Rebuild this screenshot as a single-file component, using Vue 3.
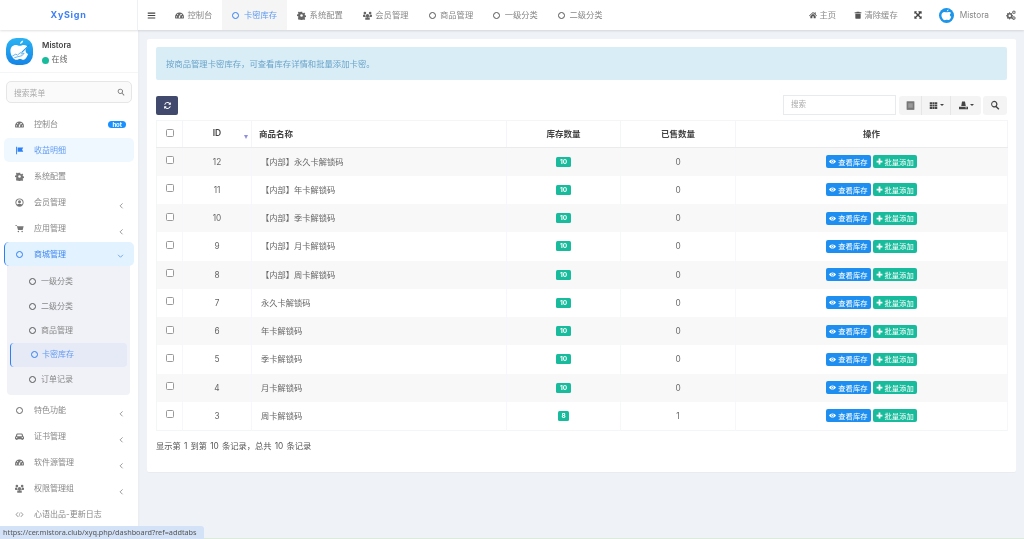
<script setup>
const icons = {
  gauge: 'M12 4a12 12 0 0 0-12 12c0 1.500.3 3 .8 4h22.400c.5-1 .8-2.500.8-4A12 12 0 0 0 12 4zm-8 13a1.600 1.600 0 1 1 0-3.200A1.600 1.600 0 0 1 4 17zm3-6a1.600 1.600 0 1 1 0-3.200A1.600 1.600 0 0 1 7 11zm5 7.500a2.300 2.300 0 0 1-1-4.300L14.500 8l1 .4-2 6.800a2.300 2.300 0 0 1-1.500 3.300zM17 11a1.600 1.600 0 1 1 0-3.200 1.600 1.600 0 0 1 0 3.200zm3 6a1.600 1.600 0 1 1 0-3.200 1.600 1.600 0 0 1 0 3.200z',
  cog: 'M10 2h4l.6 3 2 .9 2.600-1.700 2.800 2.800-1.700 2.600.9 2 2.800.6v4l-2.800.6-.9 2 1.700 2.600-2.800 2.800-2.600-1.700-2 .9-.6 2.600h-4l-.6-2.600-2-.9-2.600 1.700L2.200 18.800l1.700-2.600-.9-2-3-.6v-4l3-.6.9-2-1.700-2.600L5 1.400l2.600 1.700 2-.9zM12 8.500a3.500 3.500 0 1 0 0 7 3.500 3.500 0 0 0 0-7z',
  flag: 'M3 2h2.500v20H3zM7 4h15l-3 5 3 6H7z',
  user: 'M12 1a11 11 0 1 0 0 22 11 11 0 0 0 0-22zm0 2.500a8.500 8.500 0 0 1 6.500 14c-1.500-1.600-3.800-2.500-6.500-2.500s-5 .9-6.500 2.500A8.500 8.500 0 0 1 12 3.500zM12 6a4 4 0 1 0 0 8 4 4 0 0 0 0-8z',
  cart: 'M1 3h4l1 3h17l-2.500 10H8L5 5H1zM9 18a2 2 0 1 1 0 4 2 2 0 0 1 0-4zm10 0a2 2 0 1 1 0 4 2 2 0 0 1 0-4z',
  car: 'M6 4h12c1 0 1.800.6 2.200 1.500L22 11c1.200.5 2 1.500 2 3v5h-3v2h-3.500v-2h-11v2H3v-2H0v-5c0-1.500.8-2.500 2-3l1.800-5.500C4.200 4.600 5 4 6 4zm.6 2.500L5.200 11h13.600l-1.400-4.500zM4.500 13a1.800 1.800 0 1 0 0 3.600 1.800 1.800 0 0 0 0-3.600zm15 0a1.800 1.800 0 1 0 0 3.600 1.800 1.800 0 0 0 0-3.600z',
  users: 'M12 8a4.500 4.500 0 1 1 0 9 4.500 4.500 0 0 1 0-9zM5 2a3.500 3.500 0 1 1 0 7 3.500 3.500 0 0 1 0-7zm14 0a3.500 3.500 0 1 1 0 7 3.500 3.500 0 0 1 0-7zM0 10h6c-.5 2.500.5 5 2 6H3l-3-1zm24 0h-6c.5 2.500-.5 5-2 6h5l3-1zM6 17.500h12V23H6z',
  code: 'M8 5l1.500 1.500L4 12l5.500 5.500L8 19l-7-7zm8 0l7 7-7 7-1.500-1.500L20 12l-5.500-5.500zM12.500 7h2L11.500 17h-2z',
  home: 'M12 3l5 4.500V4h3v6.200L24 14l-1.500 1.500L12 6 1.500 15.500 0 14zM4 15.500l8-7 8 7V22h-6v-6h-4v6H4z',
  trash: 'M8 2h8l1 2h5v3H2V4h5zM4 8h16v13.500c0 .8-.7 1.500-1.500 1.500h-13C4.700 23 4 22.300 4 21.500z',
  expand: 'M1 1h8L6.500 3.500 12 9l3-3-2.500-5H23v8l-2.500-2.500L15 12l5.500 5.500L23 15v8h-8l2.500-2.500L12 15l-5.500 5.500L9 23H1v-8l2.500 2.500L9 12 3.500 6.500 1 9z',
  cogs: 'M8 5l1.500.4.600 1.800 1.700.7 1.700-.8 1.700 1.700-.8 1.700.7 1.700 1.800.6v2.400l-1.800.6-.7 1.700.8 1.700-1.700 1.700-1.700-.8-1.700.7-.6 1.800H7.800l-.6-1.800-1.700-.7-1.700.8-1.700-1.700.8-1.700-.7-1.700-1.800-.6v-2.400l1.800-.6.7-1.700-.8-1.700 1.700-1.700 1.700.8 1.700-.7zm1 6a3 3 0 1 0 0 6 3 3 0 0 0 0-6zM19 1a2.800 2.800 0 0 1 2.700 2.200l1.800.8-1 1.700.5 1.800-1.800.8A3 3 0 0 1 19 9.500 3 3 0 0 1 16.500 8l-1.800-.5.300-2-.3-1.800 1.800-.6A2.800 2.800 0 0 1 19 1zm0 2.500a1.700 1.700 0 1 0 0 3.400 1.700 1.700 0 0 0 0-3.400zM19 15a2.800 2.800 0 0 1 2.700 2.200l1.800.8-1 1.700.5 1.800-1.800.8a3 3 0 0 1-5.200 0l-1.800-.8.500-1.800-.5-1.700 1.800-.8A2.800 2.800 0 0 1 19 15zm0 2.500a1.700 1.700 0 1 0 0 3.400 1.700 1.700 0 0 0 0-3.400z',
  refresh: 'M12 3a9 9 0 0 1 6.400 2.600L21 3v7h-7l2.700-2.700A6.500 6.500 0 0 0 5.900 10H3.200A9 9 0 0 1 12 3zM3 14h7l-2.700 2.700A6.500 6.500 0 0 0 18.100 14h2.700A9 9 0 0 1 5.600 18.400L3 21z',
  list: 'M2 1h20v22H2zm4 5v12h12V6z',
  th: 'M2 3h6v5H2zm7 0h6v5H9zm7 0h6v5h-6zM2 9.500h6v5H2zm7 0h6v5H9zm7 0h6v5h-6zM2 16h6v5H2zm7 0h6v5H9zm7 0h6v5h-6z',
  export: 'M8 1h8l2 12H6zM0 15h24v7H0zm17 2.500v2h4v-2z',
  search: 'M10 2a8 8 0 0 1 6.300 12.900l6.200 6.200-2.400 2.400-6.200-6.200A8 8 0 1 1 10 2zm0 3a5 5 0 1 0 0 10 5 5 0 0 0 0-10z',
  eye: 'M12 5c5 0 9.500 3 12 7-2.500 4-7 7-12 7S2.500 16 0 12c2.500-4 7-7 12-7zm0 2.500a4.500 4.500 0 1 0 0 9 4.500 4.500 0 0 0 0-9zm0 2a2.500 2.500 0 1 1 0 5 2.500 2.500 0 0 1 0-5z',
  plus: 'M9 2h6v7h7v6h-7v7H9v-7H2V9h7z',
  bars: 'M2 4h20v3H2zm0 6.500h20v3H2zM2 17h20v3H2z',
  search2: 'M10 2a8 8 0 0 1 6.300 12.900l6.200 6.200-1.800 1.800-6.200-6.200A8 8 0 1 1 10 2zm0 2.500a5.500 5.500 0 1 0 0 11 5.500 5.500 0 0 0 0-11z'
}

const tabs = [
  { icon: 'gauge', label: '控制台' },
  { ring: true, label: '卡密库存', active: true },
  { icon: 'cog', label: '系统配置' },
  { icon: 'users', label: '会员管理' },
  { ring: true, label: '商品管理' },
  { ring: true, label: '一级分类' },
  { ring: true, label: '二级分类' }
]

const menuTop = [
  { icon: 'gauge', label: '控制台', hot: true },
  { icon: 'flag', label: '收益明细', current: true },
  { icon: 'cog', label: '系统配置' },
  { icon: 'user', label: '会员管理', arrow: true },
  { icon: 'cart', label: '应用管理', arrow: true }
]
const subMenu = [
  { label: '一级分类' },
  { label: '二级分类' },
  { label: '商品管理' },
  { label: '卡密库存', active: true },
  { label: '订单记录' }
]
const menuBottom = [
  { ring: true, label: '特色功能', arrow: true },
  { icon: 'car', label: '证书管理', arrow: true },
  { icon: 'gauge', label: '软件源管理', arrow: true },
  { icon: 'users', label: '权限管理组', arrow: true },
  { icon: 'code', label: '心语出品-更新日志', faint: true }
]
const rows = [
  { id: 12, name: '【内部】永久卡解锁码', stock: 10, sold: 0 },
  { id: 11, name: '【内部】年卡解锁码', stock: 10, sold: 0 },
  { id: 10, name: '【内部】季卡解锁码', stock: 10, sold: 0 },
  { id: 9, name: '【内部】月卡解锁码', stock: 10, sold: 0 },
  { id: 8, name: '【内部】周卡解锁码', stock: 10, sold: 0 },
  { id: 7, name: '永久卡解锁码', stock: 10, sold: 0 },
  { id: 6, name: '年卡解锁码', stock: 10, sold: 0 },
  { id: 5, name: '季卡解锁码', stock: 10, sold: 0 },
  { id: 4, name: '月卡解锁码', stock: 10, sold: 0 },
  { id: 3, name: '周卡解锁码', stock: 8, sold: 1 }
]
const apple = 'M27 11.500c.3-3.300 2.800-6 6-6.500.2 3.500-2.500 6.300-6 6.500zM19 13.500c3 0 5 1.500 7.500 1.500s4.500-1.500 8-1.500c3.300 0 6 1.500 7.500 4-3.300 1.800-4.500 4.300-4.300 7 .2 3 2 5 4.800 6.200-1.700 5-5.500 11.300-9 11.300-2.300 0-3.500-1.500-6.500-1.500s-4.300 1.500-6.500 1.500C15.500 43 8.500 33.500 8.500 25 8.500 18 13 13.500 19 13.500z'
</script>

<template>
  <div class="page">
    <header class="topbar">
      <div class="logo">XySign</div>
      <div class="tabbar">
        <span class="burger"><svg class="ic burger-ic" viewBox="0 0 24 24"><path :d="icons.bars" /></svg></span>
        <div v-for="t in tabs" :key="t.label" class="tab" :class="{ 'tab-active': t.active }">
          <i v-if="t.ring" class="ring tab-ring"></i>
          <svg v-else class="ic" viewBox="0 0 24 24"><path :d="icons[t.icon]" /></svg>
          <span class="lift">{{ t.label }}</span>
        </div>
        <div class="top-right">
          <span class="tool tool-home"><svg class="ic" viewBox="0 0 24 24"><path :d="icons.home" /></svg><span class="lift">主页</span></span>
          <span class="tool tool-clear"><svg class="ic" viewBox="0 0 24 24"><path :d="icons.trash" /></svg><span class="lift">清除缓存</span></span>
          <svg class="ic tool-expand" viewBox="0 0 24 24"><path :d="icons.expand" /></svg>
          <svg class="avatar-small" viewBox="0 0 52 52">
            <circle cx="26" cy="26" r="26" fill="#1c95ea" />
            <path :d="apple" fill="#fff" />
          </svg>
          <span class="top-name">Mistora</span>
          <svg class="ic tool-cogs" viewBox="0 0 24 24"><path :d="icons.cogs" /></svg>
        </div>
      </div>
    </header>

    <div class="body">
      <aside class="sidebar">
        <div class="user">
          <svg class="avatar" viewBox="0 0 52 52">
            <defs>
              <linearGradient id="avatarFill" x1="0" y1="0" x2="0" y2="1">
                <stop offset="0" stop-color="#2bb3f3" />
                <stop offset="1" stop-color="#1485e6" />
              </linearGradient>
            </defs>
            <rect width="52" height="52" rx="20" fill="url(#avatarFill)" />
            <path :d="apple" fill="#fff" />
            <path d="M12 35l7-4 3 2 6-5 2 3 5-2-4 5-8 2-7 2" fill="none" stroke="#5eb2ef" stroke-width="1.800" />
            <path d="M30 28L45 13" stroke="#1c8fe8" stroke-width="2" />
          </svg>
          <div class="user-info">
            <div class="user-name">Mistora</div>
            <div class="user-status"><i class="dot"></i><span class="lift">在线</span></div>
          </div>
        </div>
        <div class="side-search">
          <span>搜索菜单</span>
          <svg class="ic" viewBox="0 0 24 24"><path :d="icons.search2" /></svg>
        </div>
        <nav class="menu">
          <div v-for="m in menuTop" :key="m.label" class="item" :class="{ 'item-current': m.current }">
            <svg class="ic item-ic" viewBox="0 0 24 24"><path :d="icons[m.icon]" /></svg>
            <span class="item-label lift">{{ m.label }}</span>
            <b v-if="m.hot" class="hot">hot</b>
            <svg v-if="m.arrow" class="chev" viewBox="0 0 10 10"><path d="M6.500 2L3 5.500l3.500 3.500" /></svg>
          </div>
          <div class="item item-open">
            <i class="ring item-ring"></i>
            <span class="item-label lift">商城管理</span>
            <svg class="chev chev-open" viewBox="0 0 10 10"><path d="M1.500 4l3.500 3.500L8.500 4" /></svg>
          </div>
          <div class="submenu">
            <div v-for="s in subMenu" :key="s.label" class="sub" :class="{ 'sub-active': s.active }">
              <i class="ring sub-ring"></i>
              <span class="lift">{{ s.label }}</span>
            </div>
          </div>
          <div v-for="m in menuBottom" :key="m.label" class="item">
            <i v-if="m.ring" class="ring item-ring plain"></i>
            <svg v-else class="ic item-ic" :class="{ faint: m.faint }" viewBox="0 0 24 24"><path :d="icons[m.icon]" /></svg>
            <span class="item-label lift">{{ m.label }}</span>
            <svg v-if="m.arrow" class="chev" viewBox="0 0 10 10"><path d="M6.500 2L3 5.500l3.500 3.500" /></svg>
          </div>
        </nav>
      </aside>

      <main class="main">
        <section class="card">
          <div class="alert">按商品管理卡密库存，可查看库存详情和批量添加卡密。</div>
          <div class="toolbar">
            <button class="refresh"><svg class="ic" viewBox="0 0 24 24"><path :d="icons.refresh" /></svg></button>
            <div class="tools">
              <div class="fake-input">搜索</div>
              <div class="btn-group">
                <span class="gbtn g1"><svg class="ic" viewBox="0 0 24 24"><rect x="2" y="1" width="20" height="22" fill="#999" /><path :d="icons.list" /></svg></span>
                <span class="gbtn g2"><svg class="ic" viewBox="0 0 24 24"><path :d="icons.th" /></svg><i class="caret"></i></span>
                <span class="gbtn g3"><svg class="ic" viewBox="0 0 24 24"><path :d="icons.export" /></svg><i class="caret"></i></span>
              </div>
              <span class="gbtn gsearch"><svg class="ic" viewBox="0 0 24 24"><path :d="icons.search" /></svg></span>
            </div>
          </div>
          <table class="grid">
            <colgroup>
              <col class="c1" /><col class="c2" /><col class="c3" /><col class="c4" /><col class="c5" /><col class="c6" />
            </colgroup>
            <thead>
              <tr>
                <th class="cen"><i class="check check-head"></i></th>
                <th class="cen id-head">ID<i class="sort"></i></th>
                <th class="left">商品名称</th>
                <th class="cen">库存数量</th>
                <th class="cen">已售数量</th>
                <th class="cen">操作</th>
              </tr>
            </thead>
            <tbody>
              <tr v-for="r in rows" :key="r.id">
                <td class="cen"><i class="check"></i></td>
                <td class="cen">{{ r.id }}</td>
                <td class="name">{{ r.name }}</td>
                <td class="cen"><b class="badge">{{ r.stock }}</b></td>
                <td class="cen">{{ r.sold }}</td>
                <td class="cen ops">
                  <span class="op op-blue"><svg class="ic" viewBox="0 0 24 24"><path :d="icons.eye" /></svg>查看库存</span>
                  <span class="op op-green"><svg class="ic" viewBox="0 0 24 24"><path :d="icons.plus" /></svg>批量添加</span>
                </td>
              </tr>
            </tbody>
          </table>
          <div class="summary">显示第 1 到第 10 条记录，总共 10 条记录</div>
        </section>
      </main>
    </div>
    <div class="statusbar">https://cer.mistora.club/xyq.php/dashboard?ref=addtabs</div>
    <div class="bottomline"></div>
  </div>
</template>

<style>
html, body { margin: 0; padding: 0; background: #eff3f8; }
</style>

<style scoped>
.page {
  position: relative;
  width: 1024px;
  height: 539px;
  overflow: hidden;
  font-family: Inter, "Noto Sans CJK SC", sans-serif;
  font-size: 8px;
  color: #666;
  display: flex;
  flex-direction: column;
  will-change: transform;
}
.ic { width: 9px; height: 9px; fill: currentColor; flex: none; display: block; }
.ring { display: block; box-sizing: border-box; border-radius: 50%; border: 1.300px solid #555; flex: none; }
.lift { display: block; margin-bottom: 2px; }

.topbar { height: 30px; flex: none; display: flex; background: #fff; box-shadow: 0 1px 2px rgba(0,0,0,.12); position: relative; z-index: 3; }
.logo { width: 138px; flex: none; box-sizing: border-box; border-right: 1px solid #eef0f3; text-align: center; line-height: 30px; color: #3d7ff5; font-weight: 700; font-size: 9px; letter-spacing: .7px; }
.tabbar { flex: 1; display: flex; align-items: stretch; min-width: 0; }
.burger { width: 27px; flex: none; display: flex; align-items: center; justify-content: center; color: #444; }
.burger-ic { width: 9px; height: 9px; }
.tab { display: flex; align-items: center; gap: 3.500px; padding: 0 10px; color: #888; font-size: 8.300px; white-space: nowrap; }
.tab .ic { color: #666; width: 9px; height: 9px; }
.tab-ring { width: 7px; height: 7px; margin-right: 1px; }
.tab-active { background: #f5f5f5; color: #5f9af2; }
.tab-active .tab-ring { border-color: #2d7ff5; }
.top-right { margin-left: auto; display: flex; align-items: center; color: #888; font-size: 8.300px; padding-right: 8px; }
.tool { display: flex; align-items: center; gap: 2.500px; white-space: nowrap; }
.tool .ic { color: #555; width: 8px; height: 8px; }
.tool-clear { margin-left: 18px; }
.tool-expand { margin-left: 16px; width: 8px; height: 8px; color: #444; }
.avatar-small { width: 15px; height: 15px; margin-left: 17px; flex: none; }
.top-name { margin-left: 6px; }
.tool-cogs { margin-left: 17px; width: 10px; height: 10px; color: #666; }

.body { flex: 1; display: flex; min-height: 0; }
.sidebar { width: 138px; flex: none; background: #fff; box-shadow: 1px 0 2px rgba(0,0,0,.03); z-index: 2; overflow: hidden; }
.user { height: 43px; box-sizing: border-box; border-bottom: 1px solid #f4f5f7; display: flex; align-items: flex-start; padding: 8px 6px 0; gap: 9px; }
.avatar { width: 27px; height: 27px; flex: none; }
.user-info { padding-top: 2px; }
.user-name { font-weight: 600; font-size: 8px; color: #444; line-height: 11px; }
.user-status { display: flex; align-items: center; gap: 2.500px; margin-top: 3px; font-size: 8px; line-height: 11px; color: #666; }
.dot { display: block; width: 7px; height: 7px; border-radius: 50%; background: #18bc9c; }
.side-search { margin: 8px 6px 8px; height: 22px; box-sizing: border-box; border: 1px solid #e6e6e6; border-radius: 5px; background: #fafafa; display: flex; align-items: center; justify-content: space-between; padding: 0 6px 0 7px; color: #aaa; font-size: 7.800px; }
.side-search .ic { color: #777; width: 8px; height: 8px; }

.menu { display: flex; flex-direction: column; }
.item { height: 24px; margin: 1px 4px; padding-left: 11px; display: flex; align-items: center; border-radius: 5px; color: #888; font-size: 8px; position: relative; }
.item-ic { width: 9px; height: 9px; color: #777; margin-right: 10px; margin-left: 0; }
.item-ic.faint { color: #aaa; }
.item-label { white-space: nowrap; }
.item-ring { width: 7px; height: 7px; margin: 0 11px 0 1px; border-color: #2d7ff5; }
.item-ring.plain { border-color: #666; border-width: 1px; }
.item-current { background: #f0f8ff; color: #5f9af2; }
.item-current .item-ic { color: #2d7ff5; }
.item-open { background: #e3f2ff; color: #3f88f0; border-left: 1px solid #2d7ff5; padding-left: 10px; margin-bottom: 0; }
.hot { margin-left: auto; margin-right: 8px; background: #1890ff; color: #fff; font-size: 6px; line-height: 7px; padding: 0 4px; border-radius: 4px; font-weight: 700; }
.chev { position: absolute; right: 9px; top: 12px; width: 7px; height: 7px; fill: none; stroke: #888; stroke-width: 1.200; }
.chev-open { top: 10px; right: 10px; stroke: #5b9cf0; }
.submenu { margin: 0 8px 2px 7px; padding: 3.500px 3px 3px; background: #f1f2f7; border-radius: 0 0 4px 4px; height: 129px; box-sizing: border-box; }
.sub { height: 24.400px; display: flex; align-items: center; padding-left: 19px; color: #888; font-size: 8px; border-radius: 4px; position: relative; }
.sub-ring { width: 7px; height: 7px; margin-right: 5px; border-color: #555; }
.sub-active { background: #e6e9f6; color: #5f9af2; border-left: 1px solid #2d7ff5; padding-left: 20px; }
.sub-active .sub-ring { border-color: #2d7ff5; margin-right: 4px; }

.main { flex: 1; padding: 9px 8px 0 9px; min-width: 0; }
.card { height: 433px; box-sizing: border-box; background: #fff; border-radius: 2px; padding: 8px 9px 0; box-shadow: 0 1px 1px rgba(0,0,0,.03); }
.alert { height: 33px; line-height: 34px; background: #d9edf7; color: #6aa3c9; padding-left: 10px; border-radius: 2px; font-size: 8.350px; }
.toolbar { display: flex; align-items: center; justify-content: space-between; margin-top: 15px; height: 20px; }
.refresh { width: 22px; height: 19px; border: 0; padding: 0; background: #414a6c; color: #fff; border-radius: 2px; display: flex; align-items: center; justify-content: center; }
.tools { display: flex; align-items: center; }
.fake-input { width: 113px; height: 20px; box-sizing: border-box; border: 1px solid #e8ebed; line-height: 18px; padding-left: 7px; color: #aaa; font-size: 7.500px; margin-right: 3px; }
.btn-group { display: flex; border-radius: 3px; overflow: hidden; margin-right: 2px; }
.gbtn { height: 19px; box-sizing: border-box; background: #f4f4f4; display: flex; align-items: center; justify-content: center; gap: 2px; color: #444; }
.g1 { width: 23px; border-right: 1px solid #e6e6e6; color: #777; }
.g2 { width: 29px; border-right: 1px solid #e6e6e6; }
.g3 { width: 30px; }
.gsearch { width: 24px; border-radius: 3px; }
.gsearch .ic { width: 10px; height: 10px; }
.caret { display: block; width: 0; height: 0; border-left: 2.500px solid transparent; border-right: 2.500px solid transparent; border-top: 2.500px solid #444; }

.grid { margin-top: 5px; width: 851px; table-layout: fixed; border-collapse: collapse; border: 1px solid #f4f5f6; font-size: 8.250px; color: #666; }
.c1 { width: 26px; } .c2 { width: 69px; } .c3 { width: 255px; } .c4 { width: 114px; } .c5 { width: 115px; } .c6 { width: 272px; }
.grid th { height: 27px; box-sizing: border-box; padding: 0 0 2px; font-weight: 600; color: #444; font-size: 8.500px; border-right: 1px solid #f4f5f6; border-bottom: 1px solid #e9ebec; }
.grid td { height: 28.250px; box-sizing: border-box; padding: 0; border-right: 1px solid #f6f7f8; }
.grid tbody tr:nth-child(odd) { background: #f8f8f8; }
.cen { text-align: center; }
.left { text-align: left; padding-left: 7px !important; }
.name { padding: 0 0 2px 9px !important; white-space: nowrap; }
.id-head { position: relative; }
.sort { position: absolute; right: 3px; top: 14px; width: 0; height: 0; border-left: 2.500px solid transparent; border-right: 2.500px solid transparent; border-top: 4px solid #8f8fe0; }
.check { display: block; box-sizing: border-box; margin: -3px auto 0; width: 8px; height: 8px; border: 1px solid #9a9a9a; border-radius: 1.500px; background: #fff; }
.check-head { margin-top: -1px; }
.badge { display: inline-block; padding: 0 3.500px; height: 10px; line-height: 10px; border-radius: 1.500px; background: #18bc9c; color: #fff; font-size: 6.500px; font-weight: 700; vertical-align: top; }
.ops { white-space: nowrap; font-size: 0; }
.op { display: inline-flex; align-items: center; height: 13px; padding: 0 3px; gap: 2px; border-radius: 2px; color: #fff; font-size: 7.300px; vertical-align: middle; }
.op .ic { width: 7px; height: 7px; }
.op-blue { background: #1e8ff0; margin-right: 2px; }
.op-green { background: #18bc9c; }
.summary { margin-top: 10px; font-size: 8.250px; line-height: 11px; color: #555; word-spacing: .9px; }

.statusbar { position: absolute; left: 0; bottom: 0; height: 13px; line-height: 13px; width: 204px; box-sizing: border-box; padding-left: 3px; background: #d3e2f7; color: #555; font-size: 7.300px; font-family: "Noto Sans", sans-serif; z-index: 5; border-radius: 0 3px 0 0; white-space: nowrap; overflow: hidden; }
.bottomline { position: absolute; left: 204px; right: 0; bottom: 0; height: 1px; background: #dceadb; z-index: 4; }
</style>
